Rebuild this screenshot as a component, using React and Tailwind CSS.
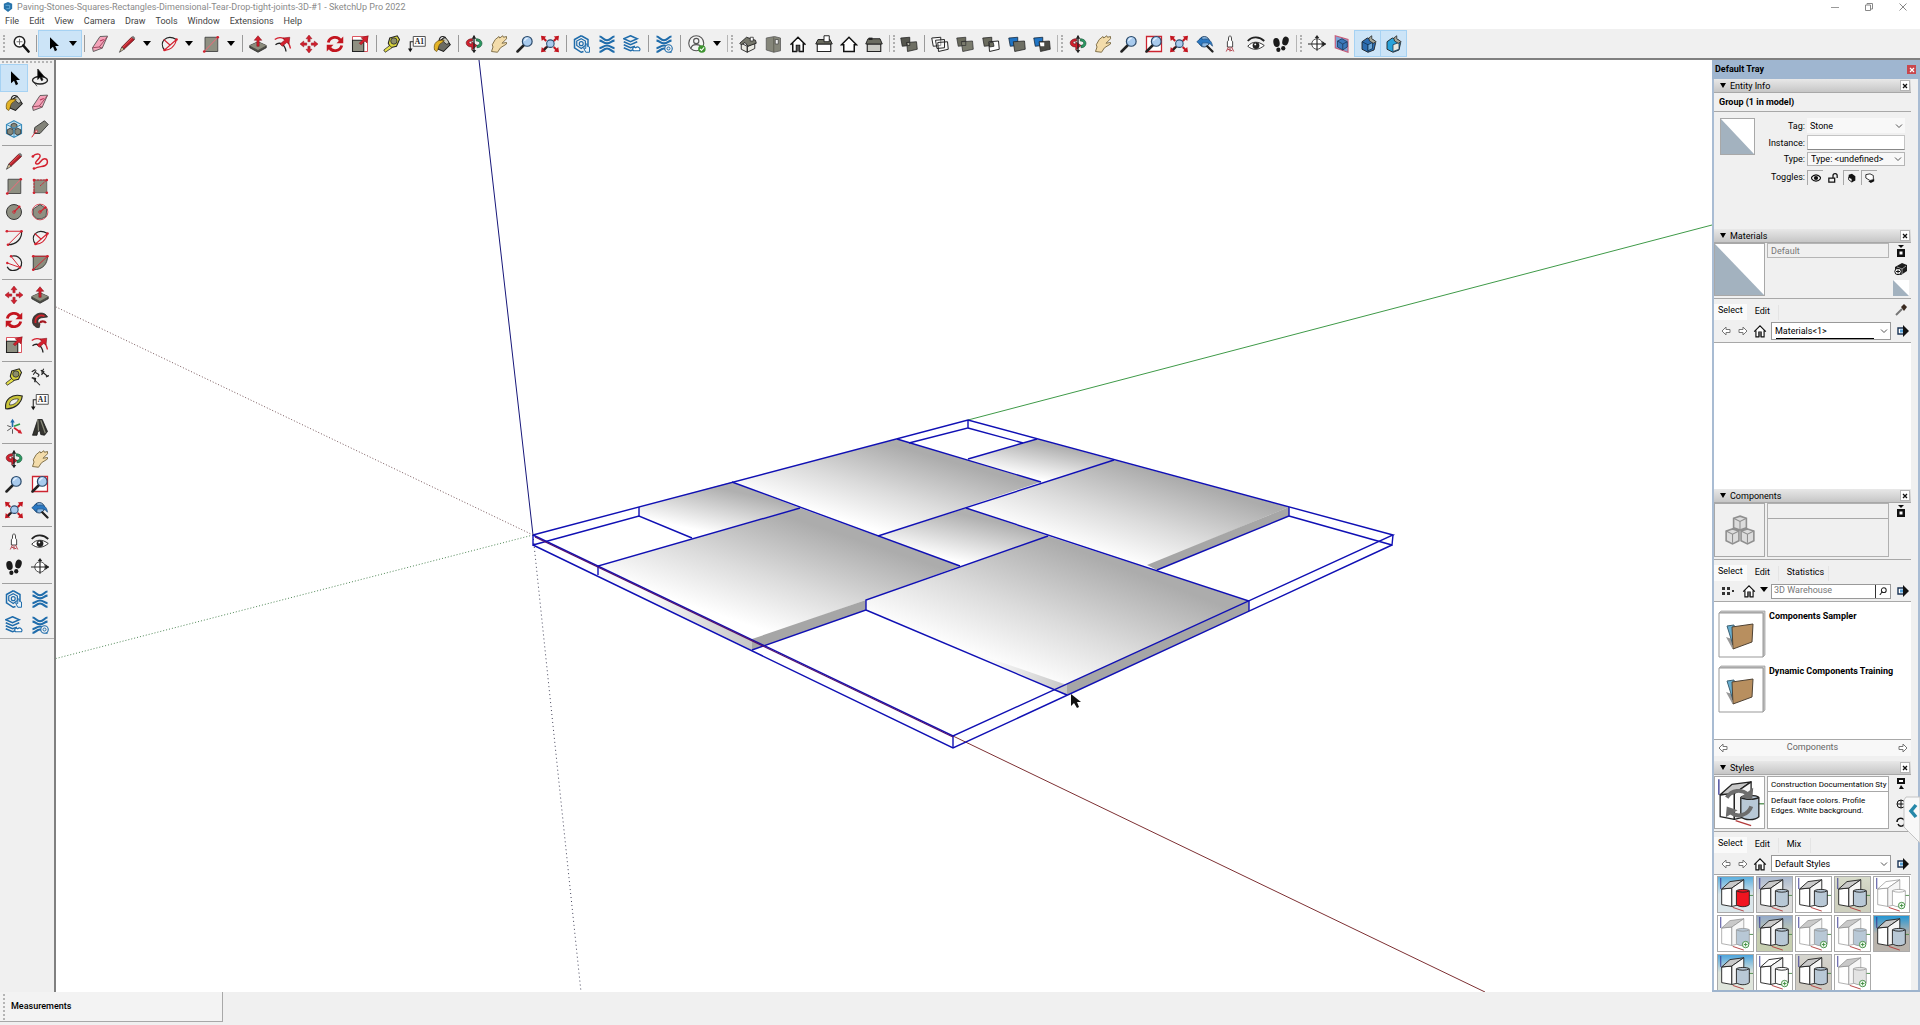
import { useState } from "react";

const RED = "#d3202e";
const BLUE = "#1f6cab";

function Svg({ children, size = "size-5" }) {
  return (
    <svg viewBox="0 0 24 24" fill="none" className={`${size} shrink-0`} aria-hidden="true">
      {children}
    </svg>
  );
}

/* ---------- tool icons ---------- */

const lens = (
  <>
    <path d="M10 14 2 22" stroke="#222" strokeWidth="3.4" strokeLinecap="round" />
    <circle cx="15" cy="8.500" r="6.500" fill="#a9cbee" stroke="#2b4a6b" strokeWidth="1.600" />
    <path d="M11.500 8a4 4 0 0 1 4-3.500" stroke="#e8f3ff" strokeWidth="1.500" />
  </>
);

const xWaves = (
  <g stroke={BLUE} strokeWidth="2.800">
    <path d="M2 2c4 0 5 5 10 5s6-5 10-5" />
    <path d="M2 7.500c4 0 5 3.500 10 3.500s6-3.500 10-3.500" />
    <path d="M2 17.500c4 0 5-3.500 10-3.500s6 3.500 10 3.500" />
    <path d="M2 22.500c4 0 5-4.500 10-4.500s6 4.500 10 4.500" />
  </g>
);

const icons = {
  search: (
    <>
      <circle cx="10" cy="9" r="7" stroke="#222" strokeWidth="2" fill="#fff" />
      <path d="M10 5v8M6 9h8" stroke="#666" strokeWidth="1.200" />
      <path d="m15 14 7 8" stroke="#111" strokeWidth="3.500" strokeLinecap="round" />
    </>
  ),
  arrow: <path d="M8 3v16l4-3.500 2.500 6 3-1.500-2.500-5.500H20z" fill="#000" />,
  lasso: (
    <>
      <ellipse cx="12" cy="15" rx="10" ry="5" stroke="#222" strokeWidth="1.800" />
      <path d="m4 18 4 5M9 0v14l3-3 2 4.500 2-1-2-4h4z" fill="#000" stroke="#222" />
    </>
  ),
  eraser: (
    <>
      <path d="m12 2 10-0.500-7 16L3 22l-1-5z" fill="#f4a3b9" stroke="#555" strokeWidth="1.200" />
      <path d="m2 17 9-1 4 1.500M11 16l11-14" stroke="#9d4a61" strokeWidth="1.300" />
      <path d="m12 8 5-2" stroke="#b8325a" strokeWidth="1.500" />
    </>
  ),
  pencil: (
    <>
      <path d="m5 16 13-13 4 3L8 19z" fill="#b8202b" stroke="#5a1016" />
      <path d="m6 17 13-13" stroke="#ef5a5a" strokeWidth="1.200" />
      <path d="m5 16 3 3-6 4z" fill="#e9cfa0" stroke="#333" />
      <path d="m18 3 2-2 3 3-1 2z" fill="#777" />
    </>
  ),
  freehand: (
    <>
      <path d="M2 6c6-6 13-3 9 2s-7 7-3 8 5-7 10-7 5 7 1 9-9 1-14 4" stroke={RED} strokeWidth="1.900" />
      <circle cx="2.500" cy="6" r="1.800" fill={RED} />
      <circle cx="4" cy="22" r="1.800" fill={RED} />
    </>
  ),
  arc: (
    <>
      <path d="M6 20C-2 10 8-2 22 6" stroke="#222" strokeWidth="1.600" />
      <path d="M6 20 22 6M5 6l9 8M6 20c6 1 14-4 16-14" stroke={RED} strokeWidth="1.400" />
      <circle cx="6" cy="20" r="1.800" fill={RED} />
      <circle cx="22" cy="6" r="1.800" fill={RED} />
    </>
  ),
  arc2: (
    <>
      <path d="M22 3c1 9-6 18-18 18" stroke="#222" strokeWidth="1.600" />
      <path d="M2 3h20L4 21" stroke={RED} strokeWidth="1.300" />
      <circle cx="2.500" cy="3" r="1.800" fill={RED} />
      <circle cx="22" cy="3" r="1.800" fill={RED} />
      <circle cx="4" cy="21" r="1.800" fill={RED} />
    </>
  ),
  arc3: (
    <>
      <path d="M8 3c17-4 20 19 2 19-5 0-6-3-7-5" stroke="#222" strokeWidth="1.600" />
      <path d="m8 3 12 15L3 12" stroke={RED} strokeWidth="1.300" />
      <circle cx="8" cy="3" r="1.600" fill={RED} />
      <circle cx="20" cy="18" r="1.600" fill={RED} />
      <circle cx="3" cy="12" r="1.600" fill={RED} />
    </>
  ),
  pie: (
    <>
      <path d="M3 3h19c0 10-6 18-19 18z" fill="#8b8c7c" stroke="#333" strokeWidth="1.200" />
      <path d="M3 3h19L3 21" stroke={RED} strokeWidth="1.300" />
      <circle cx="3" cy="3" r="1.800" fill={RED} />
      <circle cx="22" cy="3" r="1.800" fill={RED} />
      <circle cx="3" cy="21" r="1.800" fill={RED} />
    </>
  ),
  rect: (
    <>
      <path d="M4 3h17v19H4z" fill="#8f9082" stroke="#444" strokeWidth="1.200" />
      <path d="M3 22 21 3" stroke="#e0707a" strokeWidth="1.400" />
      <circle cx="3" cy="22" r="1.800" fill={RED} />
      <circle cx="21" cy="3" r="1.800" fill={RED} />
    </>
  ),
  rotRect: (
    <>
      <path d="M4 4h17v17H4z" fill="#8f9082" stroke="#555" strokeWidth="1" />
      <path d="M4 4h17M4 4v17M12 12l9-8" stroke={RED} strokeWidth="1.200" strokeDasharray="3 1" />
      <circle cx="4" cy="4" r="1.800" fill={RED} />
      <circle cx="21" cy="4" r="1.800" fill={RED} />
      <circle cx="21" cy="21" r="1.800" fill={RED} />
      <circle cx="4" cy="21" r="1.800" fill={RED} />
    </>
  ),
  circle: (
    <>
      <circle cx="12" cy="12" r="10" fill="#8f9082" stroke="#333" strokeWidth="1.300" />
      <path d="m12 12 7-7" stroke={RED} strokeWidth="1.500" />
      <circle cx="12" cy="12" r="1.800" stroke={RED} />
      <circle cx="19" cy="5" r="1.800" fill={RED} />
    </>
  ),
  polygon: (
    <>
      <circle cx="12" cy="12" r="10.500" stroke={RED} strokeWidth="1" />
      <path d="m12 2 9 6-1 10-6 3H8l-5-5V8z" fill="#8f9082" stroke="#444" strokeWidth="1.200" />
      <path d="m12 12 7-6" stroke={RED} strokeWidth="1.500" />
      <circle cx="12" cy="12" r="1.800" stroke={RED} />
      <circle cx="19" cy="6" r="1.800" fill={RED} />
    </>
  ),
  pushpull: (
    <>
      <path d="m1 14 11-5 11 5v3l-11 6-11-6z" fill="#4e4f47" stroke="#222" />
      <path d="m1 14 11-5 11 5-11 6z" fill="#8b8c7c" />
      <path d="M10.500 15V7H7l5-6 5 6h-3.500v8z" fill={RED} stroke="#7d0b14" strokeWidth=".7" />
    </>
  ),
  offset: (
    <>
      <path d="M1 6C9 0 19 5 22 18" stroke={RED} strokeWidth="1.700" />
      <path d="M2 13c6-5 13 0 14 9" stroke="#222" strokeWidth="1.800" />
      <path d="m8 12 6-5-2-3 9-1-1 9-3-2-6 5z" fill={RED} stroke="#7d0b14" strokeWidth=".7" />
    </>
  ),
  move: (
    <path
      d="m12 0 4 5h-2.500v4h-3V5H8zM12 24l-4-5h2.500v-4h3v4H16zM0 12l5-4v2.500h4v3H5V16zM24 12l-5 4v-2.500h-4v-3h4V8z"
      fill={RED}
      stroke="#8d0e18"
      strokeWidth=".6"
    />
  ),
  rotate: (
    <>
      <path d="M3 10c2-8 13-9 16-3M21 14c-2 8-13 9-16 3" stroke="#c3151f" strokeWidth="3.800" />
      <path d="M23 2v9h-9zM1 22v-9h9z" fill="#c3151f" />
    </>
  ),
  scale: (
    <>
      <path d="M2 2h20v20H2z" fill="#fff" stroke={RED} />
      <path d="M2 7h15v15H2z" fill="#8f9082" stroke="#222" strokeWidth="1.400" />
      <path d="m11 11 5-5-2.500-2.500L23 1l-2 9.500L18.500 8l-5 5z" fill={RED} stroke="#7d0b14" strokeWidth=".7" />
    </>
  ),
  followme: (
    <>
      <path d="M22 8C18-1 2 2 2 14c0 5 5 9 9 8l1-5c-4-1-4-7 2-8z" fill="#4a3835" stroke="#222" />
      <path d="M6 16C5 8 12 4 18 7" stroke="#d5222c" strokeWidth="2.400" />
      <path d="M12 16c1-3 6-3 8 0" stroke="#a3161e" strokeWidth="3" />
    </>
  ),
  tape: (
    <>
      <path d="M9 4 19 1l3 5-4 9-8 2-3-6z" fill="#d6d23c" stroke="#222" strokeWidth="1.400" />
      <circle cx="14.500" cy="8" r="4.200" fill="#8d8f6a" stroke="#222" />
      <path d="m9 14-8 6 2 3 9-6z" fill="#e6e04a" stroke="#222" />
    </>
  ),
  dimension: (
    <>
      <path d="M3 9 7 3M6 6l5 3M17 1l-3 5M11 9l-2 3M3 14l9 9M16 6l6 5" stroke="#222" strokeWidth="1.400" />
      <path d="m13 3 4 2-3 4M1 13l5 1-1 5M20 12l4-2M1 5l5-3" stroke="#222" strokeWidth="1.700" />
    </>
  ),
  protractor: (
    <>
      <path d="M1 21C-1 9 9 0 23 4 22 14 12 22 1 21z" fill="#c9c43a" stroke="#222" strokeWidth="1.500" />
      <path d="M6 16c0-5 4-9 12-8-2 5-6 8-12 8z" fill="#f0f0f0" stroke="#333" />
    </>
  ),
  text: (
    <>
      <path d="M7 2h16v13H7z" fill="#fff" stroke="#444" strokeWidth="1.200" />
      <path d="M7 9H3v10" stroke="#222" strokeWidth="1.400" />
      <path d="m0 18 3 5 3-5z" fill="#111" />
      <text x="9" y="12.500" fontSize="10" fontWeight="700" fill="#222" fontFamily="Liberation Serif, serif">
        A1
      </text>
    </>
  ),
  axes: (
    <>
      <path d="M10 12V4" stroke="#1f6cab" strokeWidth="2.200" />
      <path d="m7 6 3-5 3 5z" fill="#1f6cab" />
      <path d="m12 13 7 5" stroke={RED} strokeWidth="2.200" />
      <path d="m17 20 6 1-3-6z" fill={RED} />
      <path d="m12 11 8-3" stroke="#2d9b4a" strokeWidth="2.200" />
      <path d="m9 13-6 4M3 10l5 2M10 15v6" stroke="#555" strokeWidth="1.300" />
    </>
  ),
  text3d: (
    <>
      <path d="M9 2h6l7 16-4 5-5-1-1-5-3 1-1 5H2z" fill="#34342f" stroke="#111" />
      <path d="m9 2 1 15M13 3l6 17" stroke="#8b8c7c" strokeWidth="1.600" />
    </>
  ),
  paint: (
    <>
      <path d="m7 9 9-6 7 10-9 9-7-3z" fill="#6b6b63" stroke="#1b1b1b" strokeWidth="1.400" />
      <path d="M8 8c1-8 9-8 9 0" stroke="#222" strokeWidth="1.500" />
      <ellipse cx="17" cy="8" rx="5" ry="2.800" transform="rotate(50 17 8)" fill="#c9c9bd" stroke="#222" />
      <path d="M2 20C0 10 6 6 15 7l-4 4c-4 1-3 7-6 11z" fill="#e3b326" stroke="#5c4409" strokeWidth=".9" />
    </>
  ),
  components: (
    <>
      <path d="m12 1 10 5v12l-10 5-10-5V6z" stroke="#3b8dbd" strokeWidth="1.600" fill="#d5ebf5" />
      <path d="m12 4 4 2v4l-4 2-4-2V6zM7 11l4 2v5l-4 2-4-2v-5zM17 11l4 2v5l-4 2-4-2v-5z" fill="#83867a" stroke="#222" />
      <path d="m2 6 10 5 10-5M12 11v12" stroke="#3b8dbd" strokeWidth="1.300" />
    </>
  ),
  tag: (
    <>
      <path d="m4 18 1-8L18 1l5 5-11 12z" fill="#83847a" stroke="#333" strokeWidth="1.200" />
      <circle cx="7" cy="15" r="1.500" fill="#fff" stroke={RED} />
      <path d="m6 16-5 7" stroke={RED} strokeWidth="1.300" />
    </>
  ),
  orbit: (
    <>
      <path d="M10 5C-1 5-1 16 9 16v4l7-6-7-5v3c-5 0-5-4 1-4z" fill={RED} stroke="#5a0f14" strokeWidth=".8" />
      <path d="M15 5c10 0 10 12 1 12v-3c5-1 5-6-1-6z" fill="#2c9a63" stroke="#0e4a2b" strokeWidth=".8" />
      <path d="M12 1v22" stroke="#222" strokeWidth="1.800" />
      <path d="m9 5 3-5 3 5zM9 20l3 4 3-4z" fill="#222" />
    </>
  ),
  pan: (
    <path
      d="m3 13 4-7 5-4 1 2 4-3 1 2 4-1v3l-6 6 6-1v2l-8 5-4 6-8-1 2-6z"
      fill="#f3dcaa"
      stroke="#77663f"
      strokeWidth="1.200"
    />
  ),
  zoom: lens,
  zoomWindow: (
    <>
      <path d="M2 2h20v20H2z" fill="#fff" stroke="#cc2430" strokeWidth="1.700" />
      {lens}
    </>
  ),
  extents: (
    <>
      <path d="m0 1 7 1-2 2 3 3-2 2-3-3-2 2zM24 1l-7 1 2 2-3 3 2 2 3-3 2 2zM0 23l7-1-2-2 3-3-2-2-3 3-2-2zM24 23l-7-1 2-2-3-3 2-2 3 3 2-2z" fill="#c3151f" />
      <path d="m9 15-5 5" stroke="#222" strokeWidth="2.500" />
      <circle cx="12.500" cy="11.500" r="5" fill="#a9cbee" stroke="#2b4a6b" strokeWidth="1.400" />
    </>
  ),
  previous: (
    <>
      <circle cx="11" cy="9" r="7" fill="#8bb9e4" stroke="#2b4a6b" strokeWidth="1.300" />
      <path d="m1 9 7-6v3c7-2 13 0 14 9-4-5-8-5-14-4v4z" fill="#2a78c2" stroke="#123f70" strokeWidth=".8" />
      <path d="m15 15 7 7" stroke="#222" strokeWidth="3" strokeLinecap="round" />
    </>
  ),
  camera: (
    <>
      <path d="M10 4c1-4 3-4 4 0v3l1.500 2v7h-7V9L10 7z" fill="#fff" stroke="#333" strokeWidth="1.200" />
      <path d="m10 16-3 6M14 16l3 6M12 17v5M9 19l6 2" stroke="#b5404a" strokeWidth="1.300" />
    </>
  ),
  eye: (
    <>
      <path d="M1 8C7 1 17 2 23 8" stroke="#222" strokeWidth="2.400" />
      <path d="M1 15c6-7 14-7 22-1-7 6-15 7-22 1z" fill="#fff" stroke="#333" strokeWidth="1.300" />
      <circle cx="12" cy="14" r="4.500" fill="#222" />
      <circle cx="11" cy="12.500" r="1.300" fill="#fff" />
    </>
  ),
  feet: (
    <g fill="#1b1b1b">
      <ellipse cx="6" cy="10" rx="4.200" ry="6" transform="rotate(-10 6 10)" />
      <ellipse cx="8.500" cy="19.500" rx="2.800" ry="3" />
      <ellipse cx="18" cy="8" rx="4.200" ry="6" transform="rotate(15 18 8)" />
      <ellipse cx="15" cy="17.500" rx="2.800" ry="3" />
    </g>
  ),
  section: (
    <>
      <circle cx="12" cy="12" r="7" fill="#fff" stroke="#444" strokeWidth="1.200" />
      <path d="M0 12h24M12 3v18" stroke="#222" strokeWidth="1.500" />
      <path d="m19 8 5 4-5 4zM9 4l3-4 3 4z" fill="#222" />
    </>
  ),
  hexHand: (
    <>
      <path d="m11 1 9 5v9M14 22l-3 1-9-6V6l9-5" stroke={BLUE} strokeWidth="2" />
      <path d="m11 5 5.500 3v6L11 18l-6-4V8z" stroke={BLUE} strokeWidth="1.600" />
      <circle cx="11" cy="11.500" r="2.600" stroke={BLUE} strokeWidth="1.600" />
      <path d="M17 12v6l-3-1 3 6h5v-7l-3-1v-3z" fill="#e8f2fa" stroke={BLUE} strokeWidth="1.300" />
    </>
  ),
  waves: xWaves,
  layers: (
    <>
      <path d="m10 1 9 4-9 4-9-4zM1 9l9 4 9-4M1 13l9 4 6-2M1 17l9 4 3-1" stroke={BLUE} strokeWidth="2" />
      <path d="M14 21c-3-3 1-6 3-4 3-3 7 1 5 4z" fill="#fff" stroke={BLUE} strokeWidth="1.500" />
    </>
  ),
  wavesGear: (
    <>
      {xWaves}
      <circle cx="18" cy="18" r="5" fill="#f0f0f0" stroke={BLUE} strokeWidth="1.500" />
      <circle cx="18" cy="18" r="2" stroke={BLUE} strokeWidth="1.300" />
    </>
  ),
  user: (
    <>
      <circle cx="11" cy="11" r="10" fill="#f5f5f5" stroke="#555" strokeWidth="1.500" />
      <circle cx="11" cy="8" r="3.500" stroke="#555" strokeWidth="1.500" />
      <path d="M4 18c1-7 13-7 14 0" stroke="#555" strokeWidth="1.500" />
      <circle cx="18.500" cy="18.500" r="5" fill="#3d9430" />
      <path d="m16 18.500 2 2 3.500-4" stroke="#fff" strokeWidth="1.400" />
    </>
  ),
  iso: (
    <>
      <path d="m3 11 8 4v8l-8-4zM11 15l10-4v7l-10 5z" fill="#e9e9e2" stroke="#222" strokeWidth="1.200" />
      <path d="m1 11 9-8 12 4 1 4-11 4-4-5-5 3z" fill="#77786c" stroke="#222" strokeWidth="1.200" />
      <path d="M15 3h4v5h-4z" fill="#fff" stroke="#222" />
    </>
  ),
  top: (
    <>
      <path d="M3 4 14 2l8 2v17l-9 2-10-3z" fill="#85867a" stroke="#555" />
      <path d="M13 3v20" stroke="#55564c" />
      <path d="M15 6h4v6h-4z" fill="#eee" stroke="#444" />
    </>
  ),
  front: (
    <>
      <path d="M5 11v11h14V11l-7-7z" fill="#fff" />
      <path d="M2 13 12 3l10 10M5 11v11h5v-8h4v8h5V11" stroke="#111" strokeWidth="2" />
      <path d="M10 14h4v8h-4z" fill="#555" />
    </>
  ),
  right: (
    <>
      <path d="M3 12h18v10H3z" fill="#fff" stroke="#222" strokeWidth="1.500" />
      <path d="m4 6-3 6h22l-3-6z" fill="#6b6c60" stroke="#222" strokeWidth="1.300" />
      <path d="M12 1h7v8h-7z" fill="#fff" stroke="#222" strokeWidth="1.300" />
    </>
  ),
  back: <path d="M2 13 12 3l10 10h-3v9H5v-9z" fill="#fff" stroke="#111" strokeWidth="2" />,
  left: (
    <>
      <path d="M3 12h18v10H3z" fill="#c9c9c2" stroke="#222" strokeWidth="1.500" />
      <path d="m4 5-3 7h22l-3-7z" fill="#6b6c60" stroke="#222" strokeWidth="1.300" />
      <path d="M5 5h5" stroke="#222" strokeWidth="3" />
    </>
  ),
  iso1: (
    <>
      <path d="M1 4 13 3v11L3 15z" fill="#55564e" stroke="#222" />
      <path d="m9 10 13-1 1 10-13 3z" fill="#6e6f64" stroke="#222" />
      <path d="M9 10h4v4h-3z" fill="#b5b5a8" stroke="#222" />
    </>
  ),
  iso2: (
    <>
      <path d="M1 4 13 3v11L3 15z" fill="#fff" stroke="#222" strokeWidth="1.300" />
      <path d="m9 10 13-1 1 10-13 3zM6 7l12-1v11L8 18z" fill="#fff" fillOpacity=".5" stroke="#222" strokeWidth="1.300" />
    </>
  ),
  iso3: (
    <>
      <path d="M1 4 13 3v11L3 15z" fill="#6a6b5d" stroke="#333" />
      <path d="m7 9 15-1 1 11-14 3z" fill="#7b7c6e" stroke="#333" />
      <path d="m7 9 6-1v6H8" stroke="#333" />
    </>
  ),
  iso4: (
    <>
      <path d="M1 4 13 3v11L3 15z" fill="#6a6b5d" stroke="#222" />
      <path d="m9 9 13-1 1 11-13 3z" fill="#fff" stroke="#222" strokeWidth="1.300" />
      <path d="M10 10h5l1 5-6 1z" fill="#6a6b5d" stroke="#222" />
    </>
  ),
  iso5: (
    <>
      <path d="M1 4 13 3v11L3 15z" fill="#1f74c4" stroke="#123" />
      <path d="m7 9 15-1 1 11-14 3z" fill="#6e6f64" stroke="#222" />
    </>
  ),
  iso6: (
    <>
      <path d="M1 4 13 3v11L3 15z" fill="#1f74c4" stroke="#123" />
      <path d="m8 9 14-1 1 11-13 3z" fill="#4a4b45" stroke="#222" />
      <path d="M9 10h6v5h-5z" fill="#fff" />
    </>
  ),
  planeFill: (
    <>
      <path d="m3 1 17 5v17L3 17z" fill="#7da3d6" stroke="#c95a78" strokeWidth="1.500" />
      <path d="m6 8 6-3 7 4v7l-6 4-7-4z" fill="#3b78bb" stroke="#1c3556" />
      <path d="m6 8 7 4 6-3M13 12v8" stroke="#1c3556" />
    </>
  ),
  cutA: (
    <>
      <path d="m4 9 7-5 9 3 2 4-2 9-8 3-8-4z" fill="#2b6cb0" stroke="#222" strokeWidth="1.200" />
      <path d="m4 9 8 4v10" stroke="#12304f" />
      <path d="m12 13 6-3v8l-6 3z" fill="#6fa8d8" stroke="#12304f" />
      <path d="m13 4 4-3v4l6 4-4 2-5-3z" fill="#a8a99b" stroke="#222" />
    </>
  ),
  cutB: (
    <>
      <path d="m4 9 7-5 9 3 2 4-2 9-8 3-8-4z" fill="#29a3da" stroke="#222" strokeWidth="1.200" />
      <path d="m12 13 8-3v9l-8 3z" fill="#e8e8e0" stroke="#12304f" />
      <path d="m13 4 4-3v4l6 4-4 2-5-3z" fill="#a8a99b" stroke="#222" />
    </>
  ),
};

/* ---------- toolbars ---------- */

function Tool({ name, active, className = "flex-1" }) {
  return (
    <button
      type="button"
      aria-label={name}
      className={`flex items-center justify-center ${className} ${
        active ? "bg-[#cce4f7] outline outline-[#a6d2f3]" : "hover:bg-[#e0eef9]"
      }`}
    >
      <Svg size="size-[18px]">{icons[name]}</Svg>
    </button>
  );
}

function Caret() {
  return <span className="border-x-4 border-t-5 border-x-transparent border-t-black" />;
}

function DropTool({ name }) {
  return (
    <div className="flex w-[42px]">
      <Tool name={name} className="w-7" />
      <button type="button" aria-label={`${name} options`} className="flex w-3 items-center justify-center">
        <Caret />
      </button>
    </div>
  );
}

function Sep() {
  return (
    <div className="flex w-[6px] shrink-0 justify-center py-1">
      <div className="w-px bg-[#9a9a9a]" />
    </div>
  );
}

function GripSep() {
  return (
    <div className="flex w-[10px] shrink-0 justify-center gap-[3px] py-1">
      <div className="w-px bg-[#b5b5b5]" />
      <div className="border-l-2 border-dotted border-[#b0b0b0]" />
    </div>
  );
}

function Group({ names, width, active = [] }) {
  return (
    <div className={`flex shrink-0 ${width}`}>
      {names.map((n, i) => (
        <Tool key={i} name={n} active={active.includes(n)} />
      ))}
    </div>
  );
}

function TopToolbar() {
  return (
    <div className="flex h-[31px] border-b-2 border-[#808080] bg-[#f0f0f0] py-0.5" role="toolbar">
      <div className="flex w-2 shrink-0 justify-center py-1">
        <div className="border-l-2 border-dotted border-[#b0b0b0]" />
      </div>
      <Group names={["search"]} width="w-[25px]" />
      <Sep />
      <div className="flex w-[42px] bg-[#cce4f7] outline outline-[#a6d2f3]">
        <Tool name="arrow" className="w-7" />
        <button type="button" aria-label="select options" className="flex w-3 items-center justify-center">
          <Caret />
        </button>
      </div>
      <Sep />
      <Group names={["eraser"]} width="w-[26px]" />
      <DropTool name="pencil" />
      <DropTool name="arc" />
      <DropTool name="rect" />
      <Sep />
      <Group names={["pushpull", "offset", "move", "rotate", "scale"]} width="w-[128px]" />
      <Sep />
      <Group names={["tape", "text", "paint"]} width="w-[76px]" />
      <Sep />
      <Group names={["orbit", "pan", "zoom", "extents"]} width="w-[102px]" />
      <Sep />
      <Group names={["hexHand", "waves", "layers"]} width="w-[76px]" />
      <Sep />
      <Group names={["wavesGear"]} width="w-[26px]" />
      <Sep />
      <DropTool name="user" />
      <GripSep />
      <Group names={["iso", "top", "front", "right", "back", "left"]} width="w-[152px]" />
      <GripSep />
      <Group names={["iso1"]} width="w-[24px]" />
      <Sep />
      <Group names={["iso2", "iso3", "iso4", "iso5", "iso6"]} width="w-[128px]" />
      <GripSep />
      <Group
        names={["orbit", "pan", "zoom", "zoomWindow", "extents", "previous", "camera", "eye", "feet"]}
        width="w-[229px]"
      />
      <GripSep />
      <Group names={["section", "planeFill", "cutA", "cutB"]} width="w-[102px]" active={["cutA", "cutB"]} />
    </div>
  );
}

const sideGroups = [
  { h: "h-[77px]", names: ["arrow", "lasso", "paint", "eraser", "components", "tag"] },
  {
    h: "h-[128px]",
    names: ["pencil", "freehand", "rect", "rotRect", "circle", "polygon", "arc2", "arc", "arc3", "pie"],
  },
  { h: "h-[76px]", names: ["move", "pushpull", "rotate", "followme", "scale", "offset"] },
  { h: "h-[76px]", names: ["tape", "dimension", "protractor", "text", "axes", "text3d"] },
  { h: "h-[77px]", names: ["orbit", "pan", "zoom", "zoomWindow", "extents", "previous"] },
  { h: "h-[51px]", names: ["camera", "eye", "feet", "section"] },
  { h: "h-[52px]", names: ["hexHand", "waves", "layers", "wavesGear"] },
];

function SideToolbar() {
  return (
    <div className="w-14 shrink-0 border-r-2 border-[#808080] bg-[#f0f0f0]">
      <div className="border-b border-[#b0b0b0] pt-px">
        <div className="mx-0.5 mb-0.5 border-t-2 border-dotted border-[#b5b5b5]" />
        {sideGroups.map((g, i) => (
          <div key={i}>
            {i > 0 && (
              <div className="flex h-[6px] items-center px-0.5">
                <div className="h-px flex-1 bg-[#a0a0a0]" />
              </div>
            )}
            <div className={`grid grid-cols-2 px-px ${g.h}`}>
              {g.names.map((n) => (
                <Tool key={n} name={n} active={n === "arrow"} className="" />
              ))}
            </div>
          </div>
        ))}
      </div>
    </div>
  );
}

/* ---------- model viewport ---------- */

const faces = [
  { d: "639,507 732,482 800,508 692,538 639,516", fill: "url(#faceSmall)" },
  { d: "732,482 897,439 1041,482 878,536", fill: "url(#face)" },
  { d: "968,459 1037,439 1114,460 1041,482", fill: "url(#faceSmall)" },
  { d: "966,508 1114,460 1289,507 1147,566", fill: "url(#face)" },
  { d: "878,536 966,508 1048,536 960,566", fill: "url(#faceSmall)" },
  { d: "598,566 800,508 960,566 866,600 752,640", fill: "url(#face)" },
  { d: "598,566 752,640 752,650 598,575", fill: "url(#edge)" },
  { d: "866,600 1048,536 1249,601 1067,684 1067,695 866,610", fill: "url(#face)" },
  { d: "1289,507 1289,516 1157,570 1147,565", fill: "#a6a6a6" },
  { d: "866,600 866,610 752,650 752,639", fill: "#a6a6a6" },
  { d: "1249,601 1249,611 1067,695 1067,684", fill: "#a6a6a6" },
  { d: "960,648 1067,685 1067,695", fill: "url(#edge)" },
];

const edges = [
  "533,535 968,420 1393,535 953,736 533,535",
  "533,545 953,748 1392,545",
  "533,535 533,545 639,516 692,538",
  "639,507 639,516",
  "968,420 968,428 909,443",
  "968,428 1023,443",
  "1393,535 1392,545 1289,516",
  "953,736 953,748",
  "598,575 598,566 800,508",
  "732,482 960,566",
  "897,439 1041,482",
  "878,536 1114,460",
  "968,459 1037,439",
  "966,508 1249,601 1249,611",
  "1289,507 1289,516 1157,570",
  "752,650 866,610 866,600 1048,536",
  "866,610 1067,695",
];

function Viewport() {
  return (
    <main className="min-w-0 flex-1 bg-white">
      <svg viewBox="56 60 1656 932" preserveAspectRatio="xMinYMin slice" className="size-full" role="img" aria-label="Model">
        <defs>
          <linearGradient id="face" x1=".32" y1=".8" x2=".78" y2=".3">
            <stop offset="0" stopColor="#fff" />
            <stop offset=".45" stopColor="#dcdcdc" />
            <stop offset="1" stopColor="#acacac" />
          </linearGradient>
          <linearGradient id="faceSmall" x1=".35" y1=".85" x2=".72" y2=".25">
            <stop offset="0" stopColor="#fff" />
            <stop offset="1" stopColor="#b0b0b0" />
          </linearGradient>
          <linearGradient id="edge" x1="0" x2="1">
            <stop offset=".3" stopColor="#fafafa" />
            <stop offset="1" stopColor="#c6c6c6" />
          </linearGradient>
        </defs>

        {/* axes */}
        <path d="M479 60 533 535" stroke="#17177a" />
        <path d="M968 420 1712 225" stroke="#3f9a48" />
        <path d="M953 736 1485 992" stroke="#7d3033" />
        <path d="M533 535 581 992" stroke="#44445a" strokeDasharray="1 3" />
        <path d="M533 535 54 659" stroke="#4f8756" strokeDasharray="1 2" />
        <path d="M533 535 54 306" stroke="#76565a" strokeDasharray="1 2" />

        {faces.map((f) => (
          <polygon key={f.d} points={f.d} fill={f.fill} />
        ))}
        <g fill="none" stroke="#1010b4" strokeWidth="1.400">
          {edges.map((e) => (
            <polyline key={e} points={e} />
          ))}
        </g>
        <path d="M535 537 953 737" stroke="#521070" strokeWidth="1.300" />

        {/* mouse pointer */}
        <path d="M1071 694v12l3-3 3 5 2-1-2-5h4z" fill="#111" />
      </svg>
    </main>
  );
}

/* ---------- default tray ---------- */

function SectionHeader({ title }) {
  return (
    <div className="flex h-[14px] shrink-0 items-center border-b border-[#a8a8a8] bg-linear-to-b from-[#e8e8e8] to-[#c6c6c6] pr-px pl-1.5">
      <span className="border-x-3 border-t-5 border-x-transparent border-t-black" />
      <h2 className="ml-1 flex-1 text-[9px] leading-3">{title}</h2>
      <button
        type="button"
        aria-label={`Close ${title}`}
        className="flex h-[11px] w-[10px] items-center justify-center border border-[#b5b5b5] bg-white"
      >
        <svg viewBox="0 0 6 6" className="size-1.5">
          <path d="m1 1 4 4M5 1 1 5" stroke="#111" strokeWidth="1.300" />
        </svg>
      </button>
    </div>
  );
}

function Chevron() {
  return (
    <svg viewBox="0 0 8 8" className="pointer-events-none absolute top-1/2 right-0.5 size-2 -translate-y-1/2">
      <path d="m1 2.500 3 3 3-3" fill="none" stroke="#555" />
    </svg>
  );
}

function Select({ label, id, options, className = "" }) {
  return (
    <div className={`relative ${className}`}>
      <select
        id={id}
        aria-label={label}
        className="block size-full appearance-none border-0 bg-transparent pr-3 pl-[3px] text-[9px] leading-3"
      >
        {options.map((o) => (
          <option key={o}>{o}</option>
        ))}
      </select>
      <Chevron />
    </div>
  );
}

function Tabs({ tabs }) {
  const [current, setCurrent] = useState(tabs[0]);
  return (
    <div className="flex items-end gap-1" role="tablist">
      {tabs.map((t) => (
        <button
          key={t}
          type="button"
          role="tab"
          aria-selected={t === current}
          onClick={() => setCurrent(t)}
          className={`min-w-[28px] px-1 text-left text-[9px] leading-3 ${t === current ? "bg-[#fafafa] pb-1" : "border-r border-[#e4e4e4] pb-[3px]"}`}
        >
          {t}
        </button>
      ))}
    </div>
  );
}

function NavArrow({ flip }) {
  return (
    <button type="button" aria-label={flip ? "Forward" : "Back"} className="flex w-[17px] justify-center">
      <svg viewBox="0 0 10 10" className={`size-2.5 ${flip ? "rotate-180" : ""}`}>
        <path d="m1 5 4-4v2.500h4v3H5V9z" fill="#fff" stroke="#777" />
      </svg>
    </button>
  );
}

function Home() {
  return (
    <button type="button" aria-label="Home" className="flex w-[18px] justify-center">
      <Svg size="size-3.5">{icons.front}</Svg>
    </button>
  );
}

function Details() {
  return (
    <button type="button" aria-label="Details" className="ml-1 flex w-4 shrink-0 justify-center">
      <svg viewBox="0 0 12 12" className="size-3">
        <path d="M1 3h6v6H1z" fill="#fff" stroke="#1c3556" strokeWidth="1.400" />
        <path d="m6 0 6 6-6 6z" fill="#111" />
        <path d="M3 4.500h3v3H3z" fill="#5aa3d8" />
      </svg>
    </button>
  );
}

function PaneIcon() {
  return (
    <button type="button" aria-label="Show secondary pane">
      <svg viewBox="0 0 10 12" className="h-3 w-2.5">
        <path d="M2 0h6L5 3z" fill="#111" />
        <path d="M1 4h8v8H1z" fill="#111" />
        <path d="M3.500 6.500h3v3h-3z" fill="#fff" />
      </svg>
    </button>
  );
}

function Swatch({ className }) {
  return (
    <svg viewBox="0 0 10 10" preserveAspectRatio="none" className={className}>
      <path d="M0 0h10v10H0z" fill="#fff" />
      <path d="M0 0v10h10z" fill="#a3b2bf" />
    </svg>
  );
}

function Toggle({ label, children, bordered }) {
  return (
    <button
      type="button"
      aria-label={label}
      className={`flex h-[15px] w-4 items-center justify-center ${bordered ? "border-t border-l border-[#a8a8a8]" : ""}`}
    >
      <svg viewBox="0 0 12 12" fill="none" className="size-2.5">
        {children}
      </svg>
    </button>
  );
}

function EntityInfo() {
  return (
    <section className="h-[150px] shrink-0">
      <SectionHeader title="Entity Info" />
      <p className="border-b border-[#a8a8a8] px-[5px] py-[3px] text-[9px] leading-3 font-bold">Group (1 in model)</p>
      <div className="flex px-1.5 pt-1.5">
        <Swatch className="h-[37px] w-[35px] shrink-0 border border-[#a8a8a8] bg-white" />
        <div className="grid flex-1 grid-cols-[50px_1fr] items-center gap-0.5 text-[9px] leading-3">
          <label htmlFor="tag" className="text-right">Tag:</label>
          <Select id="tag" options={["Stone"]} className="h-[15px] bg-[#f8f8f8]" />
          <label htmlFor="instance" className="text-right">Instance:</label>
          <input id="instance" className="h-[15px] w-full min-w-0 border border-[#c4c4c4] border-b-[#888] bg-white px-1" />
          <label htmlFor="type" className="text-right">Type:</label>
          <Select id="type" options={["Type: <undefined>"]} className="h-[14px] border border-[#b5b5b5] bg-[#f8f8f8]" />
          <span className="text-right">Toggles:</span>
          <div className="flex gap-0.5 pt-0.5">
            <Toggle label="Hide" bordered>
              <path d="M0 6c3-5 9-5 12 0-3 5-9 5-12 0z" stroke="#111" strokeWidth="1.500" />
              <circle cx="6" cy="6" r="2.500" fill="#111" />
            </Toggle>
            <Toggle label="Lock">
              <path d="M1 6h7v5H1zM6 6V3c0-3 5-3 5 0v3" stroke="#111" strokeWidth="1.500" />
            </Toggle>
            <Toggle label="Receive shadows" bordered>
              <path d="m2 2 4-1 4 3v5l-4 2-4-3z" fill="#111" />
              <path d="m2 5 4 2v4L2 8z" fill="#fff" stroke="#111" />
            </Toggle>
            <Toggle label="Cast shadows" bordered>
              <path d="m4 10 7-3v3l-4 2z" fill="#111" />
              <path d="m1 2 5-1 4 2v5L6 9 1 6z" fill="#fff" stroke="#111" />
            </Toggle>
          </div>
        </div>
      </div>
    </section>
  );
}

function Materials() {
  return (
    <section className="flex min-h-0 flex-1 flex-col">
      <SectionHeader title="Materials" />
      <div className="flex h-[56px] shrink-0 gap-0.5 border-b border-[#a8a8a8]">
        <Swatch className="h-[53px] w-[51px] shrink-0 border border-[#a8a8a8]" />
        <input
          aria-label="Material name"
          defaultValue="Default"
          className="h-[15px] min-w-0 flex-1 border border-[#b5b5b5] bg-[#f0f0f0] px-[3px] text-[9px] text-[#777]"
        />
        <div className="flex w-5 flex-col items-center justify-between pt-0.5 pb-0.5">
          <PaneIcon />
          <button type="button" aria-label="Create material">
            <svg viewBox="0 0 14 14" className="size-3.5">
              <path d="m1 5 7-4 5 2v6l-6 4-6-2z" fill="#1b1b1b" />
              <path d="m3 5 5 2 4-3M8 7v5" stroke="#999" fill="none" />
              <circle cx="4" cy="9.500" r="3.200" fill="#fff" stroke="#111" />
              <path d="M4 7.500v4M2 9.500h4" stroke="#111" />
            </svg>
          </button>
          <Swatch className="size-4" />
        </div>
      </div>
      <div className="flex h-[21px] shrink-0 items-end justify-between">
        <Tabs tabs={["Select", "Edit"]} />
        <button type="button" aria-label="Sample paint" className="mr-1 self-center">
          <svg viewBox="0 0 12 12" className="size-3">
            <path d="m1 11 6-6" stroke="#777" strokeWidth="2" />
            <path d="m6 3 3-3 3 3-3 4z" fill="#3a2a20" />
          </svg>
        </button>
      </div>
      <div className="flex h-[23px] shrink-0 items-center border-b border-[#a8a8a8] pl-[3px]">
        <NavArrow />
        <NavArrow flip />
        <Home />
        <div className="ml-0.5 flex h-[18px] flex-1 flex-col border border-[#999] bg-white">
          <Select label="Material library" options={["Materials<1>"]} className="flex-1" />
          <div className="mr-4 ml-1 h-px bg-black" />
        </div>
        <Details />
      </div>
      <div className="flex-1 bg-white" />
    </section>
  );
}

function FolderThumb() {
  return (
    <svg viewBox="0 0 48 48" className="size-12 shrink-0" aria-hidden="true">
      <path d="M3 1h44v44l-2 2V3H1z" fill="#c9c9c9" stroke="#999" strokeWidth=".7" />
      <path d="M1 3h44v44H1z" fill="#fff" stroke="#999" />
      <path d="m8 27 6 2v9z" fill="#999" />
      <path d="m9 16 7-1 1 6-2 14z" fill="#67aed0" stroke="#3d6173" />
      <path d="m14 17 21-3-1 18-19 7z" fill="#b88f5f" stroke="#4f4335" />
    </svg>
  );
}

function Components() {
  return (
    <section className="h-[272px] shrink-0">
      <SectionHeader title="Components" />
      <div className="flex h-[57px] gap-0.5 border-b border-[#a8a8a8]">
        <div className="flex h-[54px] w-[51px] shrink-0 items-center justify-center border border-[#a8a8a8]">
          <svg viewBox="0 0 30 30" className="size-8" fill="#dcdcdc" stroke="#8f8f8f" strokeWidth="1.500">
            <path d="m15 2 6 2v9l-6 2-6-2V4zM8 14l6 2v9l-6 3-6-3v-9zM22 14l6 2v9l-6 3-6-3v-9z" />
            <path d="m9 4 6 3 6-3M15 7v7M2 16l6 3 6-3M8 19v8M16 16l6 3 6-3M22 19v8" fill="none" strokeWidth="1" />
          </svg>
        </div>
        <div className="flex h-[54px] flex-1 flex-col border border-[#b0b0b0]">
          <input aria-label="Component name" className="h-[15px] w-full border-b border-[#a8a8a8]" />
          <textarea aria-label="Component description" className="min-h-0 w-full flex-1 resize-none" />
        </div>
        <div className="flex w-5 items-start justify-center pt-0.5">
          <PaneIcon />
        </div>
      </div>
      <div className="flex h-[21px] items-end">
        <Tabs tabs={["Select", "Edit", "Statistics"]} />
      </div>
      <div className="flex h-[21px] items-center border-b border-[#a8a8a8] pl-0.5">
        <button type="button" aria-label="View options" className="flex w-6 items-center justify-center">
          <svg viewBox="0 0 12 8" className="h-2 w-3">
            <path d="M0 0h3v3H0zM5 0h3v3H5zM0 5h3v3H0zM5 5h3v3H5zM10 3h2v2h-2z" fill="#333" />
          </svg>
        </button>
        <Home />
        <button type="button" aria-label="Collections" className="mb-1 flex w-3 justify-center">
          <Caret />
        </button>
        <div className="ml-px flex h-[15px] min-w-0 flex-1 border border-[#999] bg-white">
          <input
            aria-label="Search 3D Warehouse"
            placeholder="3D Warehouse"
            className="min-w-0 flex-1 border-r border-[#333] px-0.5 text-[9px] placeholder:text-[#777]"
          />
          <button type="button" aria-label="Search" className="flex w-3.5 shrink-0 items-center justify-center">
            <svg viewBox="0 0 10 10" className="size-2">
              <circle cx="6" cy="4" r="3" fill="none" stroke="#222" strokeWidth="1.300" />
              <path d="m4 6-3 4" stroke="#222" strokeWidth="1.300" />
            </svg>
          </button>
        </div>
        <Details />
      </div>
      <ul className="flex h-[137px] flex-col gap-[7px] bg-white pt-2 pl-1">
        {["Components Sampler", "Dynamic Components Training"].map((name) => (
          <li key={name} className="flex gap-[3px]">
            <FolderThumb />
            <a href="#" className="text-[9px] leading-3 font-bold whitespace-nowrap">
              {name}
            </a>
          </li>
        ))}
      </ul>
      <div className="flex h-[17px] items-center justify-between border-t border-[#a8a8a8] bg-[#f8f8f8] text-[9px] text-[#666]">
        <NavArrow />
        <span>Components</span>
        <NavArrow flip />
      </div>
    </section>
  );
}

function House({ sky = "#fff", ground = "#fff", cyl = "#b8c8d6", roof = "#c9c9c9", soft, badge, id }) {
  return (
    <svg viewBox="0 0 38 38" className="size-full" aria-hidden="true">
      <defs>
        <linearGradient id={id} x1="0" y1="0" x2="0" y2="1">
          <stop offset="0" stopColor={sky} />
          <stop offset=".5" stopColor={ground} />
        </linearGradient>
      </defs>
      <path d="M0 0h38v38H0z" fill={`url(#${id})`} />
      <path d="M3 1v12" stroke="#33338f" />
      <path d="m16 33 12 4" stroke="#b23a3a" />
      <path d="M33 20h5" stroke="#4a8a4a" />
      <g stroke={soft ? "#888" : "#222"} strokeWidth={soft ? 0.7 : 1} strokeLinejoin="round">
        <path d="M4 13 15 12v20L4 30z" fill="#fff" />
        <path d="m4 13 9-8 15-2-13 9z" fill={roof} />
        <path d="M15 12 28 3v26l-13 3z" fill="#f6f6f6" />
        <path d="M20 15c2-2 12-2 14 0v15c-3 3-11 3-14 0z" fill={cyl} />
        <path d="M20 15c3 2 11 2 14 0" fill="none" />
      </g>
      {badge && (
        <g stroke="#3f8a3f" fill="#f4fff4">
          <circle cx="30" cy="31" r="3.500" />
          <path d="M30 29v4M28 31h4" />
        </g>
      )}
    </svg>
  );
}

const styleThumbs = [
  { name: "Beta 1", sky: "#5aaede", ground: "#dbe6ea", cyl: "#f01420" },
  { name: "Camo", sky: "#a9b8cf", ground: "#dcdcdc" },
  { name: "Construction Documentation", sky: "#fff", ground: "#fff" },
  { name: "Earth Modeling", sky: "#d8dccb", ground: "#cdcfbe" },
  { name: "Hidden Line", cyl: "#fff", roof: "#fff", soft: true, badge: true },
  { name: "Simple 1", soft: true, badge: true },
  { name: "Simple 2", sky: "#93a9c9", ground: "#c6ceb0" },
  { name: "Simple 3", soft: true, badge: true },
  { name: "Simple 4", soft: true, badge: true },
  { name: "Urban Planning", sky: "#2496d4", ground: "#b9b3ac" },
  { name: "Sky", sky: "#4ea5dd", ground: "#dfe5dc" },
  { name: "Wireframe", cyl: "#fff", roof: "#fff", badge: true },
  { name: "Shaded", sky: "#d5d5cf", ground: "#cfcbc2" },
  { name: "X-Ray", cyl: "#e3e3e3", soft: true, badge: true },
];

function Styles() {
  return (
    <section className="flex h-[229px] shrink-0 flex-col">
      <SectionHeader title="Styles" />
      <div className="flex h-[57px] shrink-0 gap-0.5 border-b border-[#a8a8a8] pt-px">
        <div className="relative h-[53px] w-[51px] shrink-0 border border-[#a8a8a8] bg-white">
          <House id="current-style" />
          <svg viewBox="0 0 50 50" className="absolute inset-0 size-full" fill="none" aria-hidden="true">
            <path d="M12 20c5-8 15-9 22-3M37 29c-3 9-14 12-21 6" stroke="#6d6d6d" strokeWidth="4" />
            <path d="m39 10-1 12-12-2zM11 40l1-11 11 4z" fill="#6d6d6d" />
          </svg>
        </div>
        <div className="flex h-[53px] min-w-0 flex-1 flex-col border border-[#a8a8a8] bg-white text-[8px]">
          <input
            aria-label="Style name"
            defaultValue="Construction Documentation Sty"
            className="h-[15px] w-full border-b border-[#a8a8a8] pl-[3px]"
          />
          <textarea
            aria-label="Style description"
            defaultValue="Default face colors. Profile Edges. White background."
            className="min-h-0 w-full flex-1 resize-none overflow-hidden pt-1 pr-4 pl-[3px] leading-[10px]"
          />
        </div>
        <div className="relative flex w-5 flex-col items-center justify-between pt-0.5 pb-1">
          <svg viewBox="0 0 10 12" className="h-3 w-2.5">
            <path d="M1 0h8v6H1zM3 11l2-4 3 4z" fill="#111" />
            <path d="M3 2h4v2H3z" fill="#fff" />
          </svg>
          <svg viewBox="0 0 10 10" className="size-2.5" fill="none" stroke="#111">
            <circle cx="5" cy="5" r="4" />
            <path d="M5 1v8M1 5h8" />
          </svg>
          <svg viewBox="0 0 10 10" className="size-2.5" fill="none" stroke="#111" strokeWidth="1.500">
            <path d="M1 5c0-4 5-5 7-2M9 6c-1 4-6 4-7 1" />
          </svg>
          {/* fly-out handle over the tray's right edge */}
          <button type="button" aria-label="Expand" className="absolute top-5 left-3 z-10 h-12 w-[17px]">
            <svg viewBox="0 0 17 48" className="size-full">
              <path d="M17 1H3L1 4v27l16 16z" fill="#f8f8f8" stroke="#c4c4c4" />
              <path d="m13 9-5 6 5 6" fill="none" stroke="#2587a8" strokeWidth="3.500" />
            </svg>
          </button>
        </div>
      </div>
      <div className="flex h-[21px] shrink-0 items-end">
        <Tabs tabs={["Select", "Edit", "Mix"]} />
      </div>
      <div className="flex h-[22px] shrink-0 items-center border-b border-[#a8a8a8] pl-[3px]">
        <NavArrow />
        <NavArrow flip />
        <Home />
        <Select
          label="Style library"
          options={["Default Styles"]}
          className="ml-0.5 h-[17px] flex-1 border border-[#999] bg-white"
        />
        <Details />
      </div>
      <div className="grid min-h-0 flex-1 auto-rows-[37px] grid-cols-[repeat(5,37px)] gap-0.5 overflow-hidden bg-white pt-px pl-[3px]">
        {styleThumbs.map(({ name, ...style }, i) => (
          <button key={name} type="button" aria-label={name} className="border border-[#aaa]">
            <House id={`style-${i}`} {...style} />
          </button>
        ))}
      </div>
    </section>
  );
}

function Tray() {
  return (
    <aside className="flex w-[208px] shrink-0 flex-col border-b-2 border-[#9eb4cd] bg-[#f0f0f0]">
      <div className="flex h-[19px] shrink-0 items-center justify-between bg-[#9fb6d0] pr-1 pl-[3px]">
        <h1 className="text-[9px] font-bold">Default Tray</h1>
        <button type="button" aria-label="Close tray" className="flex h-[9px] w-[9px] items-center justify-center bg-[#c8474d]">
          <svg viewBox="0 0 6 6" className="size-1.5">
            <path d="m1 1 4 4M5 1 1 5" stroke="#fff" strokeWidth="1.200" />
          </svg>
        </button>
      </div>
      <div className="flex min-h-0 flex-1 flex-col border-r-2 border-l-2 border-[#a9bcd3] pr-[7px]">
        <EntityInfo />
        <Materials />
        <Components />
        <Styles />
      </div>
    </aside>
  );
}

/* ---------- window ---------- */

const menus = ["File", "Edit", "View", "Camera", "Draw", "Tools", "Window", "Extensions", "Help"];

function TitleBar() {
  return (
    <header className="bg-white">
      <div className="flex h-[13px] items-center pl-[3px] text-[#8a8a8a]">
        <svg viewBox="0 0 12 12" className="size-2.5" aria-hidden="true">
          <path d="m6 0 5 2v6l-5 4-5-4V2z" fill="#2673ab" />
          <path d="M3 4h5v4H4" stroke="#6db1dc" fill="none" />
        </svg>
        <span className="ml-1 flex-1 text-[9px] leading-3">
          Paving-Stones-Squares-Rectangles-Dimensional-Tear-Drop-tight-joints-3D-#1 - SketchUp Pro 2022
        </span>
        <div className="flex gap-[26px] pr-[13px]">
          <button type="button" aria-label="Minimize">
            <svg viewBox="0 0 8 8" className="size-2">
              <path d="M0 4.500h8" stroke="#999" />
            </svg>
          </button>
          <button type="button" aria-label="Restore">
            <svg viewBox="0 0 8 8" className="size-2" fill="none" stroke="#888">
              <path d="M.5 2h5v5.500h-5zM2 1.500V.5h5.500V6H6" />
            </svg>
          </button>
          <button type="button" aria-label="Close">
            <svg viewBox="0 0 8 8" className="size-2">
              <path d="m.5.5 7 7M7.500.5l-7 7" stroke="#888" />
            </svg>
          </button>
        </div>
      </div>
      <nav className="flex h-4 items-center gap-2.5 pl-[5px] text-[9px] leading-3 text-[#444]">
        {menus.map((m) => (
          <button key={m} type="button">
            {m}
          </button>
        ))}
      </nav>
    </header>
  );
}

export default function App() {
  return (
    <div className="flex h-screen w-full flex-col overflow-hidden bg-[#f0f0f0] font-[Roboto,'Noto_Sans',sans-serif] text-black">
      <TitleBar />
      <TopToolbar />
      <div className="flex min-h-0 flex-1">
        <SideToolbar />
        <Viewport />
        <Tray />
      </div>
      <footer className="h-[33px] shrink-0">
        <div className="flex h-[30px] w-[223px] items-center border-r border-b border-[#a8a8a8] bg-[#f3f3f3] pl-[3px]">
          <div className="h-[26px] border-l-2 border-dotted border-[#b5b5b5]" />
          <label htmlFor="measurements" className="ml-[6px] text-[9px] font-medium">
            Measurements
          </label>
          <input id="measurements" className="ml-2 min-w-0 flex-1 text-[9px]" />
        </div>
      </footer>
    </div>
  );
}
